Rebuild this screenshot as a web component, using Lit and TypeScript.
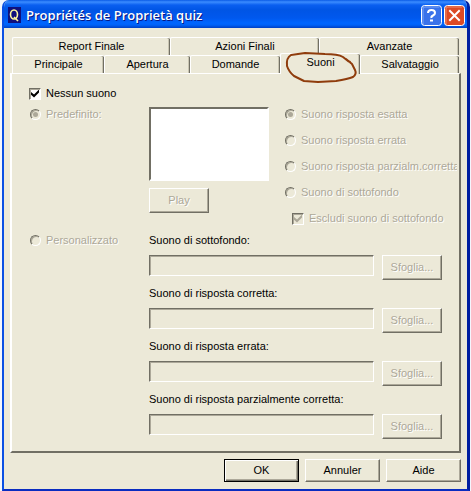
import { LitElement, html, css } from "lit";
import { customElement, state } from "lit/decorators.js";
import { classMap } from "lit/directives/class-map.js";

interface Tab {
  name: string;
  size: string;
}

const BACK_TABS: Tab[] = [
  { name: "Report Finale", size: "w158" },
  { name: "Azioni Finali", size: "w149" },
  { name: "Avanzate", size: "w140" },
];

const FRONT_TABS: Tab[] = [
  { name: "Principale", size: "w92" },
  { name: "Apertura", size: "w86" },
  { name: "Domande", size: "w90" },
  { name: "Suoni", size: "w80" },
  { name: "Salvataggio", size: "w99" },
];

const SOUND_KINDS = [
  "Suono risposta esatta",
  "Suono risposta errata",
  "Suono risposta parzialm.corretta",
  "Suono di sottofondo",
];

const CUSTOM_FILES = [
  "Suono di sottofondo:",
  "Suono di risposta corretta:",
  "Suono di risposta errata:",
  "Suono di risposta parzialmente corretta:",
];

@customElement("app-root")
export class AppRoot extends LitElement {
  @state() private selected = "Suoni";

  static styles = css`
    :host {
      display: block;
      background: #f4f6fd;
      padding: 0 1px 0 2px;
      font: 11px/15px "Liberation Sans", Arial, sans-serif;
      color: #000;
    }
    * {
      box-sizing: border-box;
    }
    button,
    input,
    select {
      font: inherit;
      color: inherit;
      margin: 0;
      padding: 0;
      border-radius: 0;
      appearance: none;
    }
    .window {
      background: #ece9d8;
      border: solid #0a50e4;
      border-width: 0 3px 2px 2px;
      border-right-color: #001ea0;
      border-bottom-color: #0a2cc0;
      border-radius: 7px 7px 0 0;
      overflow: hidden;
    }
    .titlebar {
      display: flex;
      align-items: center;
      gap: 2px;
      height: 28px;
      margin: 0 -3px 0 -2px;
      padding: 2px 5px 0 6px;
      background: linear-gradient(
        #0a5be6 0,
        #3b8cff 2px,
        #0a5ff0 5px,
        #0055e5 10px,
        #0058ee 18px,
        #0066ff 23px,
        #0062f8 25px,
        #0040c4 28px
      );
    }
    .logo {
      width: 13px;
      height: 16px;
      margin-right: 3px;
    }
    .title {
      flex: 1;
      margin: 0;
      font: 600 13px/18px "Open Sans", "Noto Sans", sans-serif;
      color: #fff;
      text-shadow: 1px 1px #0a1883;
      white-space: nowrap;
    }
    .caption {
      display: block;
      width: 21px;
      height: 21px;
      border: 0;
      background: none;
    }
    .caption svg {
      display: block;
    }
    .content {
      padding: 9px 6px 7px;
    }
    .tabs {
      display: flex;
      height: 18px;
      margin: 0 2px;
    }
    .tab {
      border: solid #fff;
      border-width: 1px 0 0 1px;
      border-radius: 2px 2px 0 0;
      box-shadow: inset -1px 0 #716f64, inset -2px 0 #c9c5b2;
      background: #ece9d8;
      white-space: nowrap;
      min-width: 0;
      height: 18px;
    }
    .w158 { flex: 158 0 0; }
    .w149 { flex: 149 0 0; }
    .w140 { flex: 140 0 0; }
    .w92 { flex: 92 0 0; }
    .w86 { flex: 86 0 0; }
    .w90 { flex: 90 0 0; }
    .w80 { flex: 80 0 0; }
    .w99 { flex: 99 0 0; }
    .tab.on {
      position: relative;
      z-index: 1;
      height: 21px;
      margin-top: -2px;
      padding-bottom: 3px;
    }
    .mark {
      position: absolute;
      left: 3px;
      top: -3px;
      width: 76px;
      height: 34px;
      overflow: visible;
      pointer-events: none;
    }
    .panel {
      border: 2px solid;
      border-color: #fff #716f64 #716f64 #fff;
      border-top-width: 1px;
      padding: 12px 0 12px 17px;
      display: grid;
      grid-template-columns: 120px 120px 1fr;
    }
    .check {
      display: flex;
      align-items: center;
      gap: 5px;
      height: 15px;
      white-space: nowrap;
    }
    .first {
      grid-column: 1 / -1;
      margin-bottom: 6px;
    }
    .off {
      color: #aca899;
      text-shadow: 1px 1px #fff;
    }
    .box,
    .dot {
      flex: none;
      display: grid;
      place-items: center;
      width: 12px;
      height: 12px;
      border: 1px solid;
      border-color: #716f64 #fff #fff #716f64;
    }
    .box {
      background: #fff;
      box-shadow: inset 1px 1px #aca899;
    }
    .dot {
      width: 11px;
      height: 11px;
      margin: 0 0 0 1px;
      border-radius: 50%;
      box-shadow: inset 1px 1px #aca899;
    }
    .box:disabled {
      background: #ece9d8;
    }
    .box:checked::before {
      content: "";
      width: 8px;
      height: 8px;
      background: #000;
      clip-path: polygon(0 30%, 38% 62%, 100% 0, 100% 36%, 38% 100%, 0 66%);
    }
    .box:checked:disabled::before {
      background: #aca899;
    }
    .dot:checked::before {
      content: "";
      width: 5px;
      height: 5px;
      border-radius: 50%;
      background: #aca899;
    }
    .preset {
      display: flex;
      flex-direction: column;
      align-items: flex-start;
      gap: 7px;
    }
    .list {
      width: 100%;
      height: 74px;
      background: #fff;
      border: 2px solid;
      border-color: #716f64 #fff #fff #716f64;
      opacity: 1;
      overflow: hidden;
    }
    .kinds {
      display: flex;
      flex-direction: column;
      gap: 11px;
      min-width: 0;
      margin: 0 2px 7px 0;
      padding: 0 0 0 15px;
      border: 0;
      overflow: hidden;
    }
    .nested {
      padding-left: 8px;
    }
    .push {
      height: 23px;
      background: #ece9d8;
      border: 1px solid;
      border-color: #fff #716f64 #716f64 #fff;
      box-shadow: inset -1px -1px #aca899;
      width: 75px;
    }
    .small {
      width: 60px;
      height: 25px;
    }
    .default {
      border-color: #000;
      box-shadow: inset 1px 1px #fff, inset -1px -1px #716f64,
        inset -2px -2px #aca899;
    }
    .files {
      grid-column: 2 / -1;
      display: flex;
      flex-direction: column;
      gap: 6px;
      padding-right: 17px;
    }
    .file {
      display: grid;
      grid-template-columns: 1fr 60px;
      column-gap: 8px;
      row-gap: 7px;
    }
    .file label {
      grid-column: 1 / -1;
    }
    .path {
      width: 100%;
      height: 21px;
      background: #ece9d8;
      border: 1px solid;
      border-color: #716f64 #fff #fff #716f64;
      box-shadow: inset 1px 1px #aca899;
    }
    .actions {
      display: flex;
      justify-content: flex-end;
      gap: 6px;
      margin-top: 6px;
    }
  `;

  private renderTab(tab: Tab) {
    const on = tab.name === this.selected;
    return html`<button
      role="tab"
      aria-selected=${on}
      class=${classMap({ tab: true, on, [tab.size]: true })}
      @click=${() => (this.selected = tab.name)}
    >
      ${tab.name}
      ${tab.name === "Suoni"
        ? html`<svg class="mark" viewBox="284 50 76 34" fill="none" stroke="#8f3c0c" stroke-width="2" stroke-linejoin="round" stroke-linecap="round" aria-hidden="true">
            <path d="M350 61L348 60L343 56Q338 53 325 53L305 52L291 54Q286 57 287 65Q289 71 294 75L304 80L318 81L336 80Q348 78 353 76Q357 73 355 69L352 63L346 58" />
          </svg>`
        : ""}
    </button>`;
  }

  render() {
    return html`
      <main class="window">
        <header class="titlebar">
          <svg class="logo" viewBox="0 0 13 16" aria-hidden="true">
            <rect width="13" height="16" fill="#10107c" />
            <ellipse cx="6" cy="7.500" rx="3.500" ry="4.500" fill="none" stroke="#fff7a0" stroke-width="1.600" />
            <path d="M6 10l4 4" stroke="#fff7a0" stroke-width="1.600" />
          </svg>
          <h1 class="title">Propriétés de Proprietà quiz</h1>
          <button class="caption" aria-label="Aide contextuelle">
            <svg width="21" height="21" viewBox="0 0 21 21">
              <rect x=".5" y=".5" width="20" height="20" rx="3" fill="#3a72ea" stroke="#fff" />
              <path d="M2 19V4Q2 2 4 2H18" fill="none" stroke="#7ba3f5" />
              <path d="M7 8Q7 5 10.500 5T14 8Q14 9.500 12 10.500T10.500 13" fill="none" stroke="#fff" stroke-width="2" />
              <rect x="9" y="14.500" width="3" height="2" fill="#fff" />
            </svg>
          </button>
          <button class="caption" aria-label="Fermer">
            <svg width="21" height="21" viewBox="0 0 21 21">
              <rect x=".5" y=".5" width="20" height="20" rx="3" fill="#dc4a25" stroke="#fff" />
              <path d="M2 19V4Q2 2 4 2H18" fill="none" stroke="#ee8a6c" />
              <path d="M6 6l9 9M15 6l-9 9" stroke="#fff" stroke-width="2" stroke-linecap="square" />
            </svg>
          </button>
        </header>

        <div class="content">
          <div role="tablist" aria-label="Schede">
            <div class="tabs">${BACK_TABS.map((t) => this.renderTab(t))}</div>
            <div class="tabs">${FRONT_TABS.map((t) => this.renderTab(t))}</div>
          </div>

          <section class="panel" role="tabpanel" aria-label="Suoni">
            <label class="check first">
              <input class="box" type="checkbox" checked />Nessun suono
            </label>

            <label class="check off">
              <input class="dot" type="radio" name="source" checked disabled />Predefinito:
            </label>
            <div class="preset">
              <select class="list" size="4" aria-label="Suoni predefiniti" disabled></select>
              <button class="push small off" disabled>Play</button>
            </div>
            <fieldset class="kinds" aria-label="Tipo di suono">
              ${SOUND_KINDS.map(
                (kind, i) => html`<label class="check off">
                  <input class="dot" type="radio" name="kind" ?checked=${i === 0} disabled />${kind}
                </label>`
              )}
              <label class="check off nested">
                <input class="box" type="checkbox" checked disabled />Escludi suono di sottofondo
              </label>
            </fieldset>

            <label class="check off">
              <input class="dot" type="radio" name="source" disabled />Personalizzato
            </label>
            <div class="files">
              ${CUSTOM_FILES.map(
                (name, i) => html`<div class="file">
                  <label for="file-${i}">${name}</label>
                  <input class="path" id="file-${i}" type="text" disabled />
                  <button class="push small off" disabled>Sfoglia...</button>
                </div>`
              )}
            </div>
          </section>

          <footer class="actions">
            <button class="push default">OK</button>
            <button class="push">Annuler</button>
            <button class="push">Aide</button>
          </footer>
        </div>
      </main>
    `;
  }
}
